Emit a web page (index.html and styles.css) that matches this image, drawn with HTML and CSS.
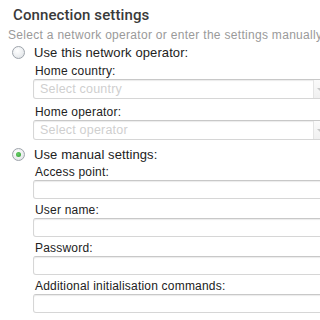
FILE: index.html
```html
<!DOCTYPE html>
<html>
<head>
<meta charset="utf-8">
<link rel="stylesheet" href="styles.css">
</head>
<body>
<div class="page">
  <div class="title">Connection settings</div>
  <div class="sub">Select a network operator or enter the settings manually for your connection.</div>

  <div class="radio-row">
    <span class="radio"></span>
    <span class="radio-text">Use this network operator:</span>
  </div>
  <div class="group">
    <div class="label first">Home country:</div>
    <div class="select"><span class="ph">Select country</span><span class="arrow"></span></div>
    <div class="label gap">Home operator:</div>
    <div class="select"><span class="ph">Select operator</span><span class="arrow"></span></div>
  </div>

  <div class="radio-row second">
    <span class="radio checked"></span>
    <span class="radio-text">Use manual settings:</span>
  </div>
  <div class="group">
    <div class="label first2">Access point:</div>
    <div class="input"></div>
    <div class="label">User name:</div>
    <div class="input"></div>
    <div class="label">Password:</div>
    <div class="input"></div>
    <div class="label">Additional initialisation commands:</div>
    <div class="input"></div>
  </div>
</div>
</body>
</html>
```
FILE: styles.css
```css
html, body {
  margin: 0;
  padding: 0;
  overflow: hidden;
  background: #fff;
}
.page {
  width: 320px;
  height: 320px;
  overflow: hidden;
  font-family: "Liberation Sans", Arial, sans-serif;
  color: #2a2a2a;
  padding-left: 7px;
  box-sizing: border-box;
}
.title {
  margin-top: 5px;
  height: 20px;
  line-height: 20px;
  font-family: Roboto, "Liberation Sans", sans-serif;
  font-size: 15px;
  font-weight: 500;
  color: #3a3a3a;
  padding-left: 6px;
  letter-spacing: 0.1px;
}
.sub {
  margin-top: 2px;
  line-height: 16px;
  font-size: 12px;
  color: #9a9a9a;
  white-space: nowrap;
  padding-left: 1px;
  letter-spacing: 0.3px;
}
.radio-row {
  margin-top: 1px;
  height: 16px;
  display: flex;
  align-items: center;
  padding-left: 5px;
}
.radio-row.second {
  margin-top: 6px;
}
.radio {
  width: 11px;
  height: 11px;
  border-radius: 50%;
  border: 1px solid #9ea4ab;
  background: radial-gradient(circle at 40% 35%, #ffffff 0%, #eef0f2 50%, #d8dce0 100%);
  box-sizing: content-box;
  position: relative;
}
.radio.checked::after {
  content: "";
  position: absolute;
  left: 3px;
  top: 3px;
  width: 5px;
  height: 5px;
  border-radius: 50%;
  background: radial-gradient(circle at 40% 40%, #6ad06a 0%, #2e9a2e 100%);
}
.radio-text {
  margin-left: 9px;
  font-size: 13px;
  color: #222;
  letter-spacing: 0.1px;
}
.group {
  padding-left: 26px;
  display: flex;
  flex-direction: column;
}
.label {
  margin-top: 3px;
  line-height: 16px;
  height: 16px;
  font-size: 12px;
  color: #222;
  padding-left: 2px;
  white-space: nowrap;
  letter-spacing: 0.2px;
}
.label.first {
  margin-top: 3px;
}
.label.gap {
  margin-top: 5px;
}
.label.first2 {
  margin-top: 2px;
}
.select, .input {
  width: 300px;
  box-sizing: border-box;
  border: 1px solid #d6d6d6;
  border-top-color: #c8c8c8;
  border-radius: 3px;
  background: #fff;
  box-shadow: inset 0 1px 1px #ececec;
}
.select {
  height: 20px;
  display: flex;
  align-items: center;
  position: relative;
}
.input {
  height: 19px;
}
.ph {
  font-size: 12.5px;
  color: #cfcfcf;
  padding-left: 6px;
  letter-spacing: 0.2px;
}
.arrow {
  position: absolute;
  left: 279px;
  top: 0;
  bottom: 0;
  width: 20px;
  border-left: 1px solid #e4e4e4;
  background: linear-gradient(#fafafa, #f0f0f0);
}
.arrow::after {
  content: "";
  position: absolute;
  left: 3px;
  top: 8px;
  border-left: 3px solid transparent;
  border-right: 3px solid transparent;
  border-top: 3px solid #c8c8c8;
}
```
